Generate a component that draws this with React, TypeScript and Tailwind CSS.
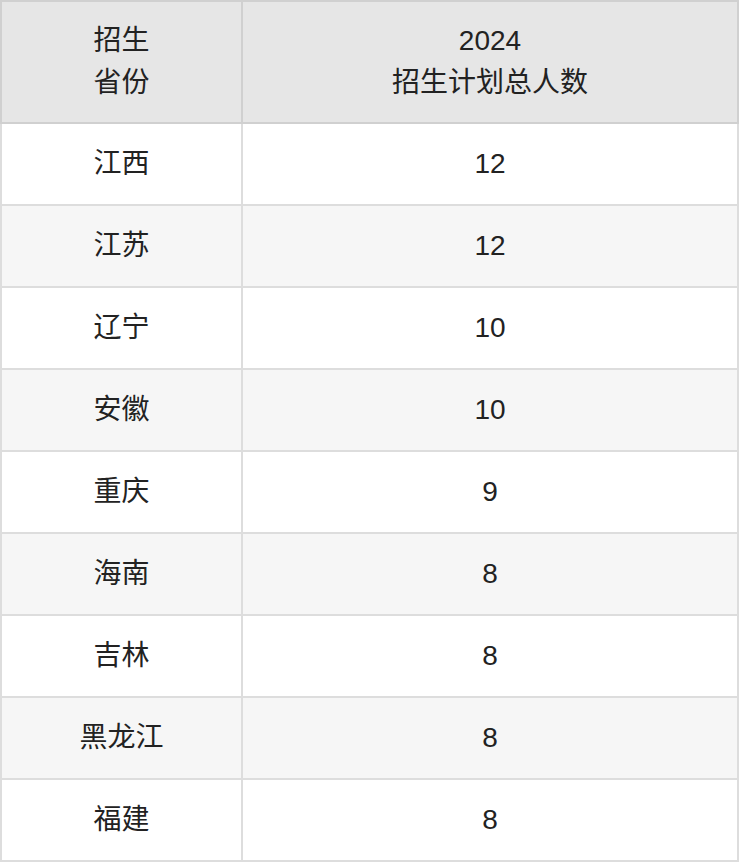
import React from "react";

const rows: [string, string][] = [
  ["江西", "12"],
  ["江苏", "12"],
  ["辽宁", "10"],
  ["安徽", "10"],
  ["重庆", "9"],
  ["海南", "8"],
  ["吉林", "8"],
  ["黑龙江", "8"],
  ["福建", "8"],
];

export default function App() {
  return (
    <div
      className="w-[739px] bg-white text-[#222222] text-[28px] leading-[42px]"
      style={{ fontFamily: '"Liberation Sans", "Noto Sans CJK SC", sans-serif' }}
    >
      <div className="flex h-[124px] bg-[#e6e6e6] border-2 border-[#d0d0d0]">
        <div className="w-[241px] border-r-2 border-[#d0d0d0] flex flex-col items-center justify-center">
          <div>招生</div>
          <div>省份</div>
        </div>
        <div className="flex-1 flex flex-col items-center justify-center">
          <div>2024</div>
          <div>招生计划总人数</div>
        </div>
      </div>
      {rows.map(([p, n], i) => (
        <div
          key={p}
          className={`flex h-[82px] border-x-2 border-b-2 border-[#dddddd] ${
            i % 2 === 1 ? "bg-[#f6f6f6]" : "bg-white"
          }`}
        >
          <div className="w-[241px] border-r-2 border-[#dddddd] flex items-center justify-center">
            {p}
          </div>
          <div className="flex-1 flex items-center justify-center">{n}</div>
        </div>
      ))}
    </div>
  );
}
